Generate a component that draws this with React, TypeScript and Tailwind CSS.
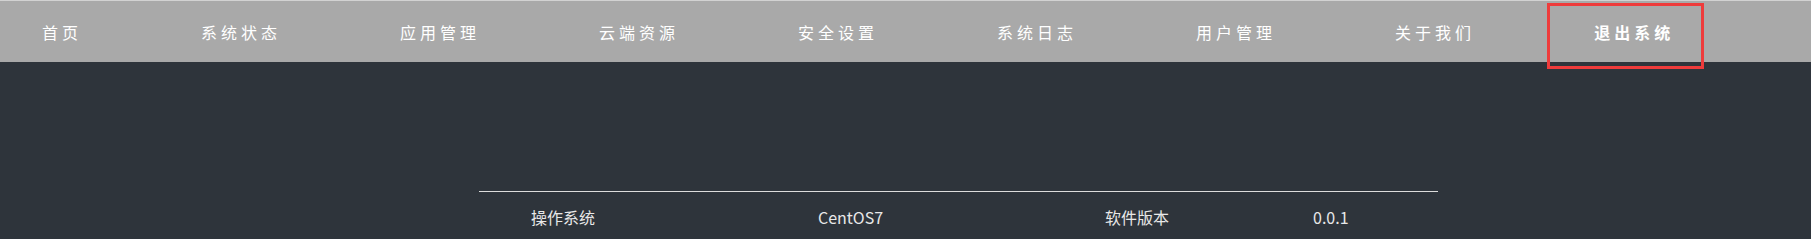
import React from 'react';

const NAV = ['首页', '系统状态', '应用管理', '云端资源', '安全设置', '系统日志', '用户管理', '关于我们'];

const INFO = [
  { label: '操作系统', value: 'CentOS7' },
  { label: '软件版本', value: '0.0.1' },
];

export default function App() {
  return (
    <div
      className="relative w-full h-[239px] overflow-hidden bg-[#2e343b]"
      style={{ fontFamily: '"Noto Sans CJK SC", "Liberation Sans", sans-serif' }}
    >
      {/* top navigation */}
      <nav className="h-[62px] bg-[#a9a9a9] border-t border-[#d2d2d2] flex items-center pl-[42px] gap-[119px]">
        {NAV.map(n => (
          <a key={n} className="text-[16px] leading-none tracking-[4px] text-white font-normal whitespace-nowrap">
            {n}
          </a>
        ))}
        <a className="text-[16px] leading-none tracking-[4px] text-white font-bold whitespace-nowrap">退出系统</a>
      </nav>

      {/* annotation box around logout */}
      <div className="absolute left-[1547px] top-[3px] w-[157px] h-[66px] border-[3px] border-[#ee3b3b]" />

      {/* info table */}
      <div className="mt-[129px] ml-[479px] w-[959px] border-t border-[#dcdcdc]">
        <div className="h-[50px] flex items-center pl-[52px] text-[16px] text-[#e8e8e8]">
          <span className="w-[287px]">{INFO[0].label}</span>
          <span className="w-[287px]">{INFO[0].value}</span>
          <span className="w-[208px]">{INFO[1].label}</span>
          <span>{INFO[1].value}</span>
        </div>
      </div>
    </div>
  );
}
